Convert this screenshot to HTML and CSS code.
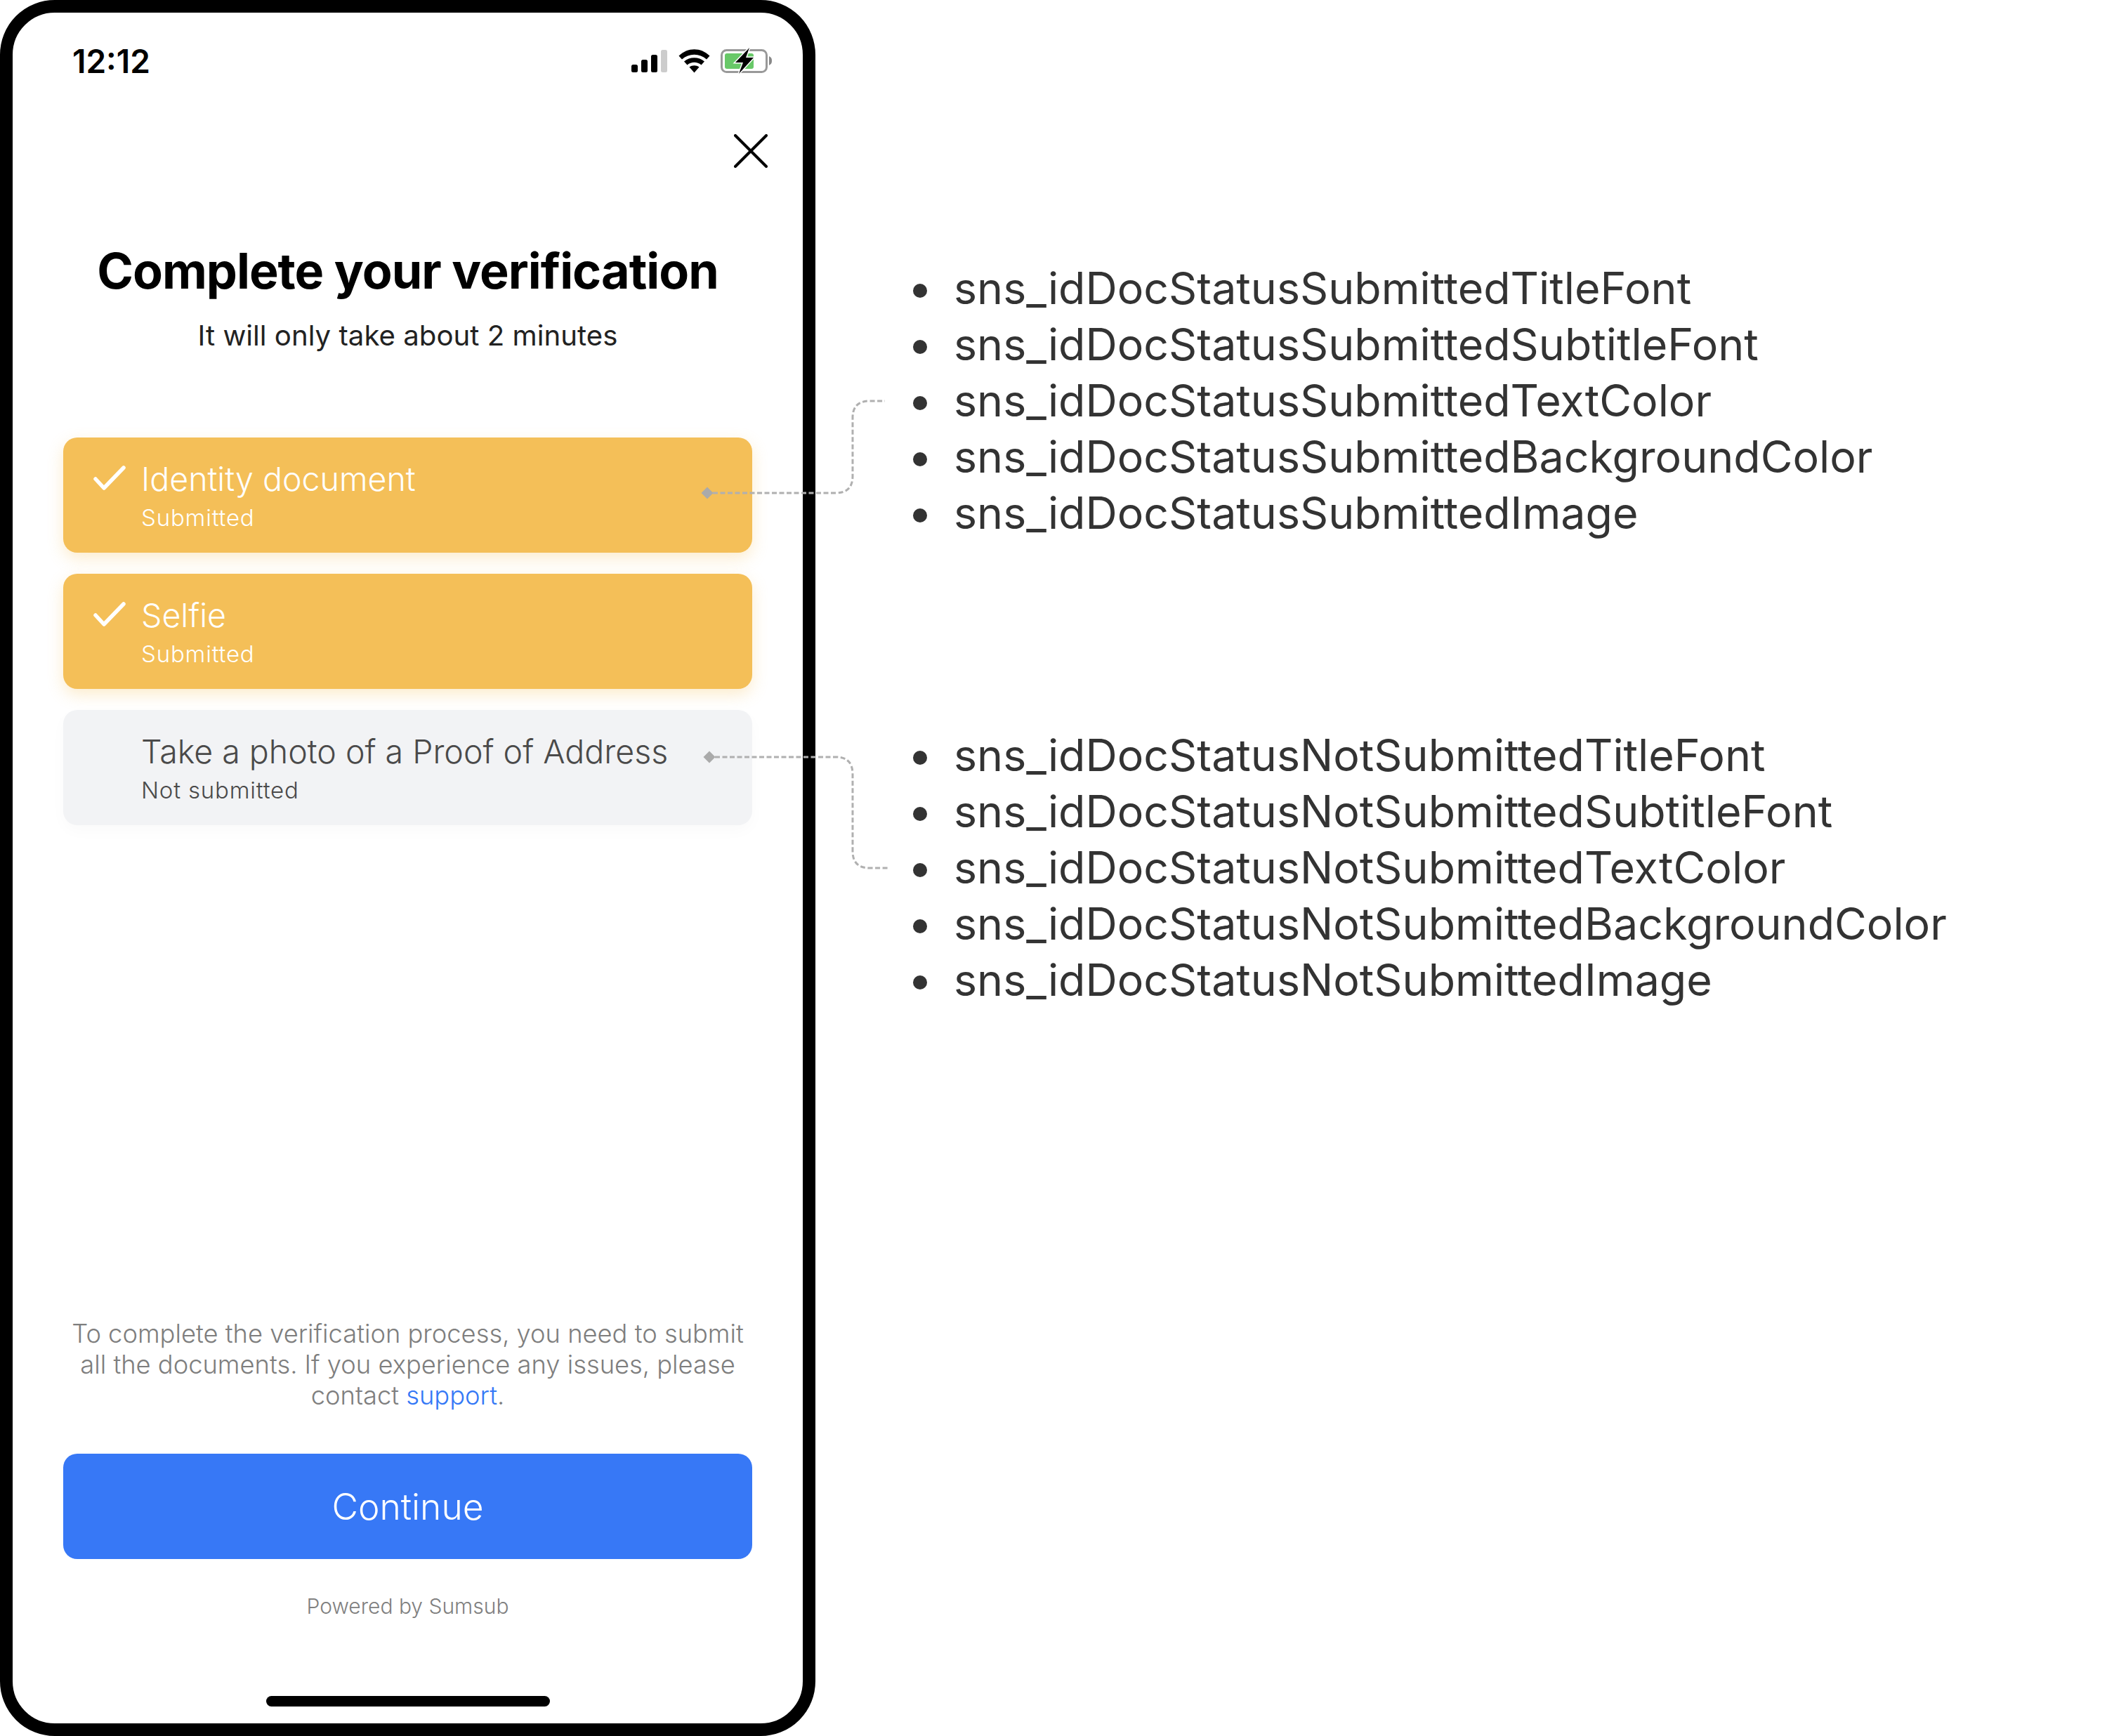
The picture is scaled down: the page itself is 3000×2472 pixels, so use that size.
FILE: index.html
```html
<!DOCTYPE html>
<html lang="en">
<head>
<meta charset="utf-8">
<title>Complete your verification</title>
<link rel="stylesheet" href="styles.css">
</head>
<body>
<main class="page">
  <section class="phone">
    <header class="status">
      <span class="time">12:12</span>
      <svg class="status-icons" viewBox="900 68 200 38" width="200" height="38" aria-hidden="true">
        <rect x="900" y="92" width="9" height="11" rx="2.5" fill="#000"/>
        <rect x="914" y="85" width="9" height="18" rx="2.5" fill="#000"/>
        <rect x="928" y="78" width="9" height="25" rx="2.5" fill="#000"/>
        <rect x="942" y="71" width="9" height="32" rx="2.5" fill="#ccc"/>
        <path d="M967.500 79.500C980 67 999 67 1011.500 79.500L1007 84.500C997 75.500 982 75.500 972 84.500Z" fill="#000"/>
        <path d="M975 87.500C983 80.500 996 80.500 1004 87.500L999.500 92.500C993.500 87.500 985.500 87.500 979.500 92.500Z" fill="#000"/>
        <path d="M982.500 95.500C986.500 92.500 992.500 92.500 996.500 95.500L989.500 103.500Z" fill="#000"/>
        <rect x="1028.500" y="71.500" width="64" height="31" rx="7" fill="none" stroke="#999" stroke-width="3"/>
        <path d="M1096 80C1099 81.500 1100 83 1100 86.500C1100 90 1099 91.500 1096 93Z" fill="#888"/>
        <rect x="1033" y="76" width="41" height="22" rx="3" fill="#68c868"/>
        <path d="M1068 68L1048 89H1059L1053 105L1074 82H1063L1068 68Z" fill="#000" stroke="#fff" stroke-width="3" paint-order="stroke"/>
      </svg>
    </header>

    <div class="close-row">
      <svg class="close" viewBox="0 0 48 48" width="48" height="48" aria-hidden="true">
        <path d="M2 2L46 46M46 2L2 46" stroke="#000" stroke-width="4" stroke-linecap="round"/>
      </svg>
    </div>

    <h1 class="title">Complete your verification</h1>
    <p class="subtitle">It will only take about 2 minutes</p>

    <ul class="cards">
      <li class="card card-done">
        <svg class="check" viewBox="0 0 46 36" width="46" height="36" aria-hidden="true">
          <path d="M3 19L15 32L43 3" fill="none" stroke="#fff" stroke-width="5.500" stroke-linecap="round" stroke-linejoin="round"/>
        </svg>
        <div class="card-text">
          <div class="card-title">Identity document</div>
          <div class="card-sub">Submitted</div>
        </div>
      </li>
      <li class="card card-done">
        <svg class="check" viewBox="0 0 46 36" width="46" height="36" aria-hidden="true">
          <path d="M3 19L15 32L43 3" fill="none" stroke="#fff" stroke-width="5.500" stroke-linecap="round" stroke-linejoin="round"/>
        </svg>
        <div class="card-text">
          <div class="card-title">Selfie</div>
          <div class="card-sub">Submitted</div>
        </div>
      </li>
      <li class="card card-todo">
        <span class="check"></span>
        <div class="card-text">
          <div class="card-title">Take a photo of a Proof of Address</div>
          <div class="card-sub">Not submitted</div>
        </div>
      </li>
    </ul>

    <p class="note">To complete the verification process, you need to submit all the documents. If you experience any issues, please contact <a class="link" href="#">support</a>.</p>
    <button class="continue" type="button">Continue</button>
    <p class="powered">Powered by Sumsub</p>
    <div class="home-bar"></div>
  </section>

  <section class="keys">
    <ul class="key-list">
      <li class="key">sns_idDocStatusSubmittedTitleFont</li>
      <li class="key">sns_idDocStatusSubmittedSubtitleFont</li>
      <li class="key">sns_idDocStatusSubmittedTextColor</li>
      <li class="key">sns_idDocStatusSubmittedBackgroundColor</li>
      <li class="key">sns_idDocStatusSubmittedImage</li>
    </ul>
    <ul class="key-list">
      <li class="key">sns_idDocStatusNotSubmittedTitleFont</li>
      <li class="key">sns_idDocStatusNotSubmittedSubtitleFont</li>
      <li class="key">sns_idDocStatusNotSubmittedTextColor</li>
      <li class="key">sns_idDocStatusNotSubmittedBackgroundColor</li>
      <li class="key">sns_idDocStatusNotSubmittedImage</li>
    </ul>
  </section>

  <svg class="connectors" viewBox="0 0 3000 2472" width="3000" height="2472" aria-hidden="true">
    <path class="dash" d="M1015 702H1190Q1214 702 1214 678V595Q1214 571 1238 571H1260"/>
    <path class="dash" d="M1018 1078H1190Q1214 1078 1214 1102V1212Q1214 1236 1238 1236H1264"/>
    <path class="node" d="M1007 693.500L1015.500 702L1007 710.500L998.500 702Z"/>
    <path class="node" d="M1010 1069.500L1018.500 1078L1010 1086.500L1001.500 1078Z"/>
  </svg>
</main>
</body>
</html>
```
FILE: styles.css
```css
* { box-sizing: border-box; }
html, body { margin: 0; padding: 0; background: #fff; }
body { font-family: Inter, "Liberation Sans", sans-serif; }

.page {
  position: relative;
  display: flex;
  width: 3000px;
  height: 2472px;
  overflow: hidden;
}

.phone {
  display: flex;
  flex-direction: column;
  flex: none;
  width: 1161px;
  height: 2472px;
  padding: 0 72px;
  border: 18px solid #000;
  border-radius: 78px;
  background: #fff;
}

.status {
  display: flex;
  align-items: center;
  justify-content: space-between;
  height: 38px;
  margin: 50px -28px 0 13px;
}
.time { font-size: 46px; font-weight: 600; color: #000; }
.status-icons { display: block; flex: none; }

.close-row { display: flex; justify-content: flex-end; margin: 85px -22px 0 0; }
.close { display: block; }

.title {
  margin: 105px 0 0;
  font-size: 70px;
  line-height: 84px;
  font-weight: 700;
  letter-spacing: -1px;
  text-align: center;
  color: #000;
}
.subtitle {
  margin: 25px 0 0;
  font-size: 40.2px;
  line-height: 50px;
  font-weight: 400;
  text-align: center;
  color: #222;
}

.cards {
  display: flex;
  flex-direction: column;
  gap: 30px;
  margin: 120px 0 0;
  padding: 0;
  list-style: none;
}
.card {
  display: flex;
  height: 164px;
  padding: 29px 0 0 43px;
  border-radius: 20px;
}
.card-done { background: #f4bf58; color: #fff; box-shadow: 0 8px 22px rgba(244, 191, 88, .3); }
.card-todo { background: #f2f3f5; color: #4a4a4a; box-shadow: 0 8px 22px rgba(0, 0, 0, .025); }
.check { display: block; flex: none; width: 46px; height: 36px; margin: 11px 22px 0 0; }
.card-title { font-size: 46.5px; line-height: 60px; font-weight: 300; }
.card-sub { margin-top: 3px; font-size: 33px; line-height: 44px; font-weight: 300; letter-spacing: .8px; }

.note {
  margin: auto 0 0;
  font-size: 36.3px;
  line-height: 44px;
  font-weight: 300;
  text-align: center;
  color: #7e7e7e;
}
.link { color: #3478f6; text-decoration: none; }

.continue {
  display: block;
  width: 100%;
  height: 150px;
  margin-top: 61px;
  border: 0;
  border-radius: 20px;
  background: #3778f6;
  color: #fff;
  font-family: inherit;
  font-size: 51.5px;
  font-weight: 300;
}

.powered {
  margin: 47px 0 0;
  font-size: 30px;
  line-height: 40px;
  font-weight: 300;
  text-align: center;
  color: #808080;
}

.home-bar {
  flex: none;
  width: 404px;
  height: 15px;
  margin: 108px auto 24px;
  border-radius: 8px;
  background: #000;
}

.keys { display: flex; flex-direction: column; gap: 265px; padding: 370px 0 0 139px; }
.key-list {
  margin: 0;
  padding: 0;
  list-style: none;
  font-size: 62.7px;
  line-height: 80px;
  color: #333;
}
.key { display: flex; align-items: center; gap: 38px; white-space: nowrap; }
.key::before {
  content: "";
  flex: none;
  width: 20px;
  height: 20px;
  margin-top: 8px;
  border-radius: 50%;
  background: #333;
}

.connectors { position: absolute; top: 0; left: 0; pointer-events: none; }
.dash { fill: none; stroke: #b0b0b0; stroke-width: 3; stroke-dasharray: 7 3.500; }
.node { fill: #aaa; }
```
